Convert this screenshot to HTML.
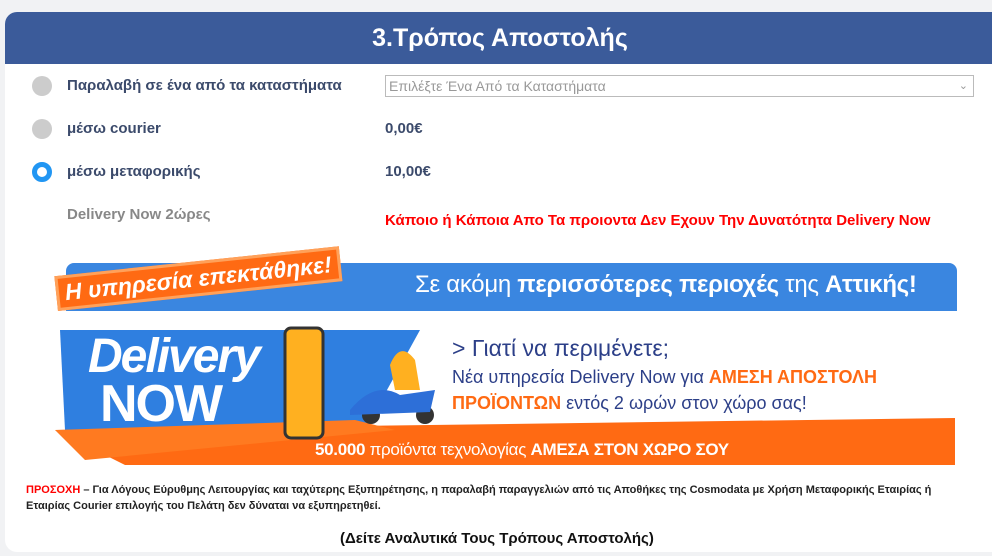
<!DOCTYPE html>
<html><head><meta charset="utf-8"><style>
*{margin:0;padding:0;box-sizing:border-box}
body{width:992px;height:556px;background:#f1f2f4;font-family:"Liberation Sans",sans-serif;position:relative;overflow:hidden}
.card{position:absolute;left:5px;top:12px;width:990px;height:540px;background:#fff;border-radius:12px 0 0 12px}
.hdr{position:absolute;left:5px;top:12px;width:990px;height:52px;background:#3b5b9a;border-radius:12px 0 0 0;color:#fff;font-weight:bold;font-size:25px;text-align:center;line-height:52px}
.a{position:absolute;white-space:nowrap}
.rad{position:absolute;left:32px;width:20px;height:20px;border-radius:50%;background:#ccc}
.lbl{font-weight:bold;font-size:15px;color:#3b4a6b;left:67px}
</style></head><body>
<div class="card"></div>
<div class="hdr">3.Τρόπος Αποστολής</div>
<div class="rad" style="top:76px"></div>
<div class="a lbl" style="top:77px">Παραλαβή σε ένα από τα καταστήματα</div>
<div class="a" style="left:385px;top:75px;width:589px;height:22px;border:1px solid #bbb;color:#999;font-size:14px;line-height:20px;padding-left:3px">Επιλέξτε Ένα Από τα Καταστήματα<span style="position:absolute;right:5px;font-size:11px">&#8964;</span></div>
<div class="rad" style="top:119px"></div>
<div class="a lbl" style="top:120px">μέσω courier</div>
<div class="a lbl" style="left:385px;top:120px">0,00€</div>
<div class="rad" style="top:162px;background:#fff;border:5px solid #2196f3"></div>
<div class="a lbl" style="top:163px">μέσω μεταφορικής</div>
<div class="a lbl" style="left:385px;top:163px">10,00€</div>
<div class="a lbl" style="top:206px;color:#888">Delivery Now 2ώρες</div>
<div class="a" style="left:385px;top:212px;color:#f00;font-weight:bold;font-size:15px">Κάποιο ή Κάποια Απο Τα προιοντα Δεν Εχουν Την Δυνατότητα Delivery Now</div>

<!-- banner -->
<div class="a" style="left:66px;top:263px;width:891px;height:48px;background:#3a86e0;border-radius:8px 8px 0 0"></div>
<div class="a" style="left:415px;top:271px;color:#fff;font-size:24px;letter-spacing:-0.3px">Σε ακόμη <b>περισσότερες περιοχές</b> της <b>Αττικής!</b></div>
<div class="a" style="left:58px;top:276px;background:#ff6a13;color:#fff;font-weight:bold;font-style:italic;font-size:23px;padding:1px 6px;border:3px solid #ffa15a;transform:rotate(-6deg);transform-origin:left bottom">Η υπηρεσία επεκτάθηκε!</div>
<svg class="a" style="left:55px;top:320px" width="905" height="150">
<polygon points="5,10 365,10 310,110 10,110" fill="#2f7fe0"/>
<polygon points="0,110 900,98 900,145 70,145" fill="#ff6a13"/>
<polygon points="0,110 300,100 340,110 30,140" fill="#ff7a20"/>
<rect x="230" y="8" width="38" height="110" rx="6" fill="#ffb020" stroke="#333" stroke-width="3"/>
<circle cx="316" cy="95" r="9" fill="#333"/><circle cx="370" cy="95" r="9" fill="#333"/>
<path d="M295,90 Q320,60 345,75 L380,70 L375,92 L295,95Z" fill="#2d6fd8"/>
<path d="M335,45 q10,-25 25,-5 l5,30 -25,0z" fill="#ffb020"/>
</svg>
<div class="a" style="left:88px;top:332px;color:#fff;font-weight:bold;font-style:italic;font-size:48px;line-height:50px;letter-spacing:-2px">Delivery</div>
<div class="a" style="left:100px;top:378px;color:#fff;font-weight:bold;font-size:52px;line-height:52px;letter-spacing:-2px">NOW</div>
<div class="a" style="left:452px;top:335px;color:#2c3f88;font-size:23px">&gt; Γιατί να περιμένετε;</div>
<div class="a" style="left:452px;top:367px;color:#2c3f88;font-size:18px">Νέα υπηρεσία Delivery Now για <b style="color:#ff6a13">ΑΜΕΣΗ ΑΠΟΣΤΟΛΗ</b></div>
<div class="a" style="left:452px;top:393px;color:#2c3f88;font-size:18px"><b style="color:#ff6a13">ΠΡΟΪΟΝΤΩΝ</b> εντός 2 ωρών στον χώρο σας!</div>
<div class="a" style="left:315px;top:440px;color:#fff;font-size:17px;letter-spacing:-0.3px"><b>50.000</b> προϊόντα τεχνολογίας <b>ΑΜΕΣΑ ΣΤΟΝ ΧΩΡΟ ΣΟΥ</b></div>

<div class="a" style="left:26px;top:482px;font-size:11px;font-weight:bold;color:#222;line-height:16px;white-space:normal;width:945px"><span style="color:#f00">ΠΡΟΣΟΧΗ</span> – Για Λόγους Εύρυθμης Λειτουργίας και ταχύτερης Εξυπηρέτησης, η παραλαβή παραγγελιών από τις Αποθήκες της Cosmodata με Χρήση Μεταφορικής Εταιρίας ή Εταιρίας Courier επιλογής του Πελάτη δεν δύναται να εξυπηρετηθεί.</div>
<div class="a" style="left:340px;top:530px;font-size:15px;font-weight:bold;color:#111">(Δείτε Αναλυτικά Τους Τρόπους Αποστολής)</div>
</body></html>
